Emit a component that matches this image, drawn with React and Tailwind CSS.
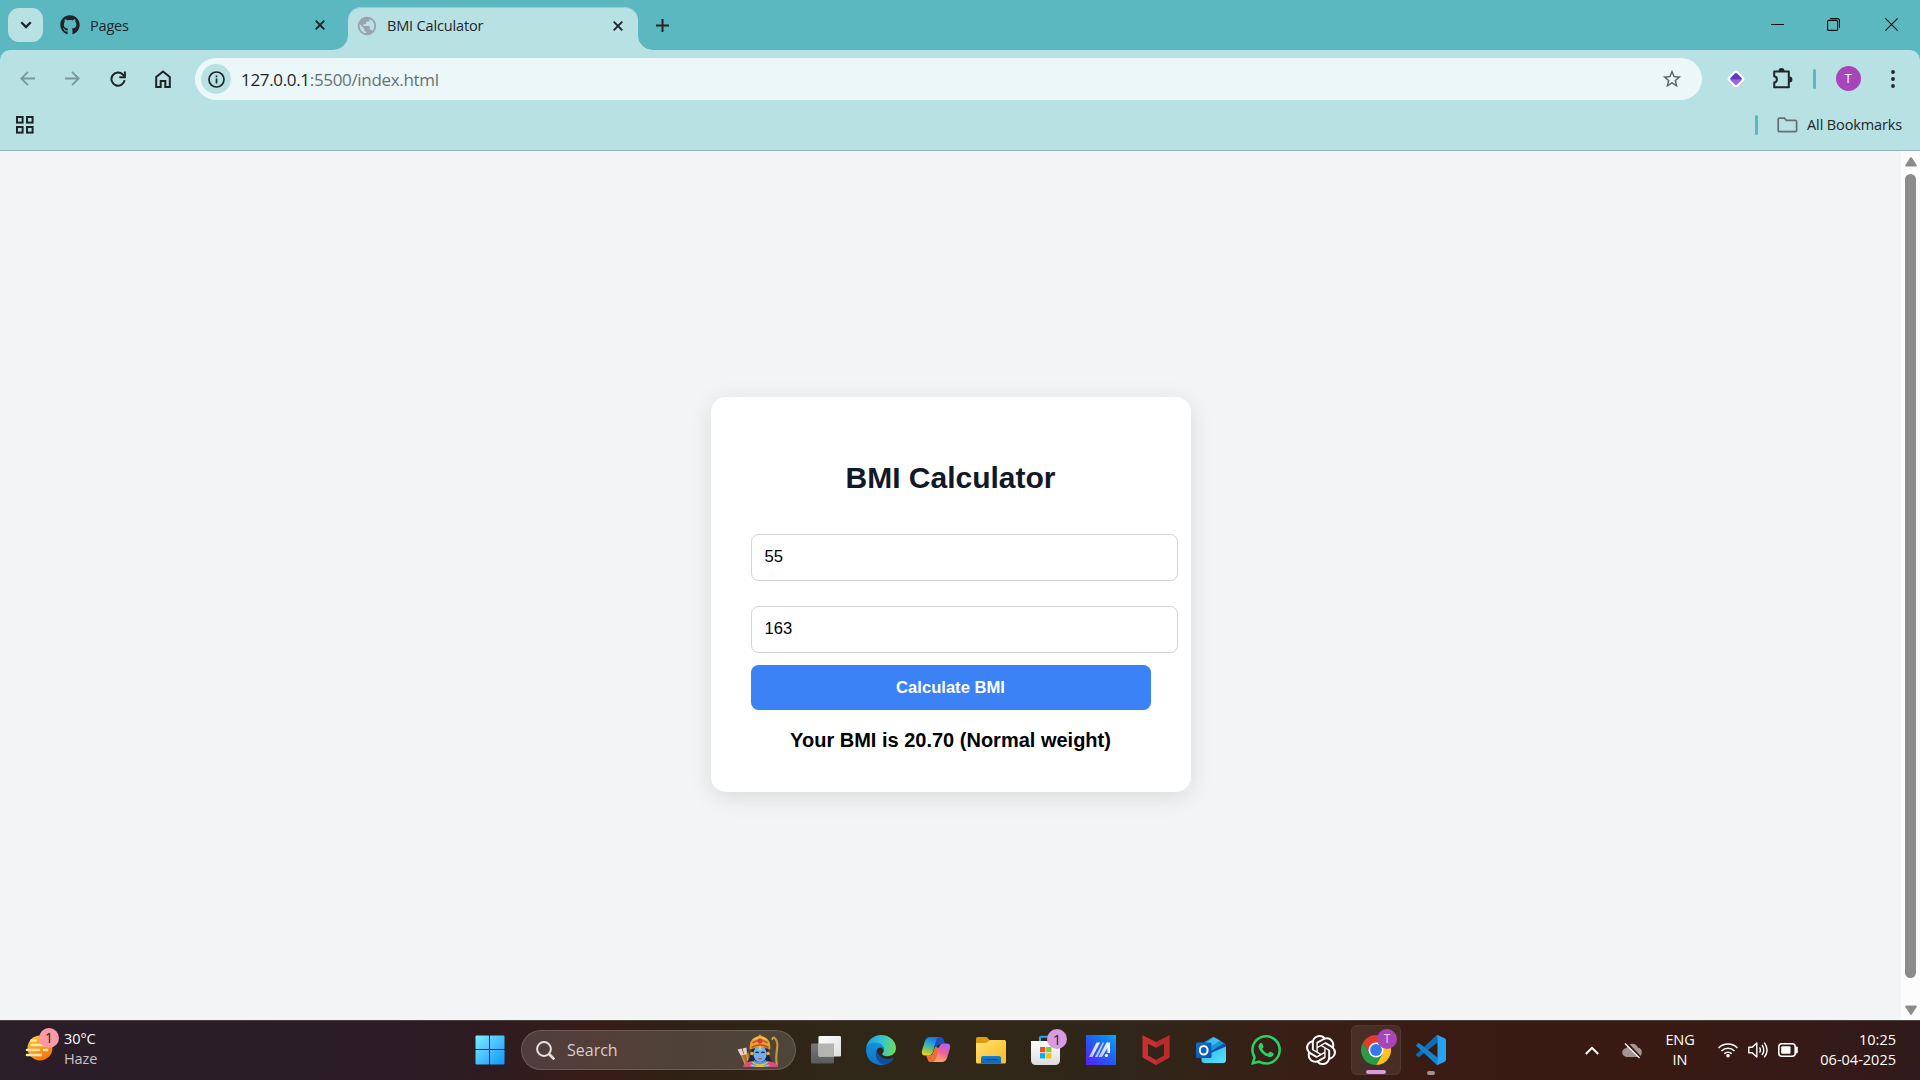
import { FaGithub } from "react-icons/fa";
import { MdPublic, MdStarBorder } from "react-icons/md";
import { SiOpenai, SiWhatsapp } from "react-icons/si";

const UI = "font-['Open_Sans','Noto_Sans',sans-serif]";

function Stroke({ w, h, className = "", sw = 2, children }) {
  return (
    <svg width={w} height={h} viewBox={`0 0 ${w} ${h}`} fill="none" stroke="currentColor" strokeWidth={sw} className={`shrink-0 ${className}`}>
      {children}
    </svg>
  );
}

function CloseX({ className = "" }) {
  return (
    <Stroke w={10} h={10} sw={1.9} className={className}>
      <path d="M.7 .7 9.3 9.3M9.3 .7.7 9.3" />
    </Stroke>
  );
}

function TabStrip() {
  return (
    <div className="flex h-[50px] shrink-0 bg-[#5bb8c1] text-[#1f2427]">
      <div className="ml-2 mt-2 flex h-[34px] w-[35px] items-center justify-center rounded-[11px] bg-[#b8e1e4]">
        <Stroke w={12} h={8} sw={2.3}><path d="M1.3 1.3 6 6 10.7 1.3" /></Stroke>
      </div>
      <div className="flex h-[50px] w-[290px] items-center pl-[17px]">
        <FaGithub className="size-5 shrink-0" />
        <span className="ml-[10px] mt-[2px] text-[14.5px] leading-5 tracking-[-0.2px]">Pages</span>
        <CloseX className="ml-auto mr-[8px]" />
      </div>
      <div className="flex h-[15px] w-[15px] self-end bg-[#b8e1e4]">
        <div className="size-full rounded-br-[15px] bg-[#5bb8c1]" />
      </div>
      <div className="mt-[7px] flex h-[43px] w-[289.5px] items-center rounded-t-[13px] border-t border-[#8dd0d5] bg-[#b8e1e4] pb-[7px] pl-[9px] pr-[15px]">
        <MdPublic className="-ml-px size-[22px] shrink-0 text-[#9ba3ad]" />
        <span className="ml-[9px] whitespace-nowrap text-[14.5px] leading-5 tracking-[-0.15px]">BMI Calculator</span>
        <CloseX className="ml-auto" />
      </div>
      <div className="flex h-[15px] w-[15px] self-end bg-[#b8e1e4]">
        <div className="size-full rounded-bl-[15px] bg-[#5bb8c1]" />
      </div>
      <div className="flex h-[50px] w-5 items-center justify-center">
        <Stroke w={13} h={13} sw={2}><path d="M6.5 0v13M0 6.5h13" /></Stroke>
      </div>
      <div className="ml-auto flex h-[49px] items-center text-[#111]">
        <Stroke w={13} h={12} sw={1} className="mr-[43px]"><path d="M0 5.5h13" /></Stroke>
        <Stroke w={13} h={13} sw={1.1} className="mr-[45px]">
          <rect x=".6" y="2.4" width="10" height="10" rx="1" />
          <path d="M3 .6h7.5a2 2 0 0 1 2 2V10" />
        </Stroke>
        <Stroke w={13} h={13} sw={1.1} className="mr-[22px]"><path d="M.3 .3 12.7 12.7M12.7 .3.3 12.7" /></Stroke>
      </div>
    </div>
  );
}

function Toolbar() {
  return (
    <div className="flex h-[58px] shrink-0 items-center rounded-t-[10px] bg-[#b8e1e4] text-[#1f2427]">
      <Stroke w={15} h={15} sw={1.8} className="mb-px ml-5 text-[#7b989c]"><path d="M15 7.5H1.5M8 .8 1.3 7.5 8 14.2" /></Stroke>
      <Stroke w={15} h={15} sw={1.8} className="mb-px ml-[30px] text-[#7b989c]"><path d="M0 7.5h13.5M7 .8l6.7 6.7L7 14.2" /></Stroke>
      <Stroke w={16} h={16} sw={2} className="mb-px ml-[29.5px]">
        <path d="M14.6 9.2A6.6 6.6 0 1 1 12.9 3.6L14.6 5.4" />
        <path d="M14.9 .6v5.6H9.3" />
      </Stroke>
      <Stroke w={16} h={18} sw={2} className="mb-px ml-[29px]">
        <path d="M1.2 16.9V6.9L8 1.5l6.8 5.4v10h-4.5v-5.8H5.7v5.8Z" />
      </Stroke>
      <div className="ml-[24.5px] flex h-[42px] w-[1507px] items-center rounded-full bg-[#ebf7f8] pl-[6px] pr-[19px]">
        <div className="flex size-[30px] items-center justify-center rounded-full bg-[#b8e1e4]">
          <Stroke w={17} h={17} sw={1.7}>
            <circle cx="8.5" cy="8.500" r="7.5" />
            <path d="M8.5 7.5v5M8.5 4.4v1.8" />
          </Stroke>
        </div>
        <span className="ml-[10px] mt-px text-[17px] leading-6 tracking-[-0.33px] text-[#1f2427]">127.0.0.1<span className="text-[#667174]">:5500/index.html</span></span>
        <MdStarBorder className="ml-auto size-[22px] text-[#5a6568]" />
      </div>
      <Stroke w={18} h={18} sw={0} className="ml-[24.5px]">
        <defs><linearGradient id="gem" gradientUnits="userSpaceOnUse" x1="9" y1="3" x2="9" y2="15"><stop offset=".45" stopColor="#6036c4" /><stop offset=".6" stopColor="#9867dc" /></linearGradient></defs>
        <path d="M7.2 1.300q1.800-1.500 3.600 0l5.900 5.900q1.500 1.800 0 3.600l-5.900 5.900q-1.800 1.500-3.600 0l-5.900-5.900q-1.500-1.800 0-3.600Z" fill="#fff" />
        <path d="M7.800 3.600q1.200-1 2.400 0l4.200 4.200q1 1.200 0 2.400l-4.200 4.200q-1.200 1-2.400 0l-4.200-4.200q-1-1.200 0-2.400Z" fill="url(#gem)" />
      </Stroke>
      <Stroke w={21} h={21} sw={2} className="mb-px ml-[27px]">
        <path d="M2.2 3.6h14.6v15.6H2.2v-4.6c3.600-.6 3.600-5.800 0-6.400Z" strokeLinejoin="round" />
        <path d="M6.5 3a3 3 0 0 1 6 0ZM17.4 8.400a3 3 0 0 1 0 6Z" fill="currentColor" stroke="none" />
      </Stroke>
      <div className="ml-[20px] h-5 w-[3px] rounded-full bg-[#5bb8c1]" />
      <div className={`mb-px ml-5 flex size-[25px] items-center justify-center rounded-full bg-[#a845b9] text-[13px] text-white ${UI}`}>T</div>
      <svg width="4" height="18" viewBox="0 0 4 18" className="mb-px ml-[30px]" fill="currentColor"><circle cx="2" cy="2" r="1.9" /><circle cx="2" cy="9" r="1.9" /><circle cx="2" cy="16" r="1.9" /></svg>
    </div>
  );
}

function BookmarksBar() {
  return (
    <div className="flex h-[43px] shrink-0 items-center border-b border-[#93b5ba] bg-[#b8e1e4] pb-[8px] text-[#1f2427]">
      <Stroke w={18} h={18} sw={2} className="ml-[15.5px]">
        <rect x="1" y="1" width="5.6" height="5.6" /><rect x="11" y="1" width="5.6" height="5.6" />
        <rect x="1" y="11" width="5.6" height="5.6" /><rect x="11" y="11" width="5.6" height="5.6" />
      </Stroke>
      <div className="ml-auto h-5 w-[3px] rounded-full bg-[#5bb8c1]" />
      <Stroke w={21} h={16} sw={1.7} className="ml-[19px] text-[#666e70]">
        <path d="M1.2 2.4q0-1.2 1.2-1.2h5l2 2.2h9q1.2 0 1.2 1.2v8.8q0 1.2-1.2 1.2h-16q-1.2 0-1.2-1.2Z" />
      </Stroke>
      <span className="ml-[9px] mr-[18px] text-[14.5px] leading-5 tracking-[-0.13px]">All Bookmarks</span>
    </div>
  );
}

function NumberField({ value }) {
  return (
    <input
      readOnly
      value={value}
      className="block h-[47px] w-[427px] rounded-[7.5px] border border-[#d1d5db] bg-white pb-[2px] pl-[13px] text-[16.6px] text-black outline-none"
    />
  );
}

function PageContent() {
  return (
    <div className="flex h-[869px] shrink-0 bg-[#f2f4f6]">
      <main className="flex flex-1 items-center justify-center pt-[18px] font-['Liberation_Sans',Arial,sans-serif]">
        <section className="flex h-[395px] w-[480px] flex-col rounded-[15px] bg-white px-10 shadow-[0_5px_25px_rgba(0,0,0,0.1)]">
          <h1 className="mt-[63px] text-center text-[30px] font-bold leading-[36px] text-[#111827]">BMI Calculator</h1>
          <div className="mt-[38px] flex flex-col gap-[25px]">
            <NumberField value="55" />
            <NumberField value="163" />
          </div>
          <button className="mt-3 h-[45px] w-full rounded-[7.5px] bg-[#3b82f6] pt-px text-[16.6px] font-bold text-white">Calculate BMI</button>
          <p className="mt-[18px] whitespace-nowrap text-center text-[20px] font-bold leading-6 text-black">Your BMI is 20.70 (Normal weight)</p>
        </section>
      </main>
      <div className="flex w-[19px] flex-col items-center bg-[#fcfcfc] pt-[6px] text-[#8b8b8b]">
        <svg width="12" height="10" viewBox="0 0 12 10" fill="currentColor"><path d="M5 .7Q6 -.4 7 .7L11.6 8q.6 1.4-.8 1.5H1.2Q-.2 9.4.4 8Z" /></svg>
        <div className="mt-[7px] h-[804px] w-[11px] rounded-full bg-current" />
        <svg width="12" height="10" viewBox="0 0 12 10" fill="currentColor" className="mt-[27px]"><path d="M5 9.3q1 1.1 2 0L11.6 2q.6-1.4-.8-1.5H1.2Q-.2.6.4 2Z" /></svg>
      </div>
    </div>
  );
}

function Tile({ children, className = "" }) {
  return <div className={`relative mr-[5px] flex size-[50px] shrink-0 items-center justify-center ${className}`}>{children}</div>;
}

function Pic({ children, box = 30 }) {
  return <svg width={box} height={box} viewBox={`0 0 ${box} ${box}`} className="overflow-visible">{children}</svg>;
}

function WindowsIcon() {
  return (
    <Pic>
      <defs><linearGradient id="win" gradientUnits="userSpaceOnUse" x1="0" y1="0" x2="30" y2="30"><stop stopColor="#7df0ff" /><stop offset="1" stopColor="#0c93ff" /></linearGradient></defs>
      <path fill="url(#win)" d="M1.5.5H14V14H.5V1.5q0-1 1-1ZM15 .5h13.500q1 0 1 1V14H15ZM.5 15H14v14.500H1.500q-1 0-1-1ZM15 15h14.500v13.500q0 1-1 1H15Z" />
    </Pic>
  );
}

function ArcherArt() {
  return (
    <svg width="43" height="33" viewBox="0 0 43 33">
      <path d="M36.500 3.500q5 2 3.500 12t0 16" fill="none" stroke="#c99338" strokeWidth="2.200" />
      <path d="M35.500 6q-1-3 2-2.500" fill="none" stroke="#dba544" strokeWidth="1.500" />
      <path d="M5 20l7-1.500 1.500 13H8Z" fill="#a8722c" />
      <path d="M.5 15.500l4-1 2.500 6-3 1.500ZM5.500 14.500l4-1 .5 6.500-2.500 1Z" fill="#e9cfc4" />
      <path d="M4.500 21l4 10M9.500 19.500l2 11" stroke="#d79c48" strokeWidth="1.200" />
      <path d="M15 15q-1.500 9-5 13l5 3h17l3.500-3q-4-5-5-13Z" fill="#1c2147" />
      <path d="M6 33q1-5 9-6l8 2.500 8-2.500q9 1 10 6Z" fill="#d94c7e" />
      <path d="M17 26q6 4 12 0l2.500 7h-17Z" fill="#4f9bdc" />
      <path d="M15 28q8 6 16 0M13.500 31q9 3 19 0" fill="none" stroke="#f0bd42" strokeWidth="1.300" />
      <ellipse cx="23" cy="20" rx="6.600" ry="8" fill="#6db2ea" />
      <path d="M18.500 18.700q1.700-1 3.200 0M24.300 18.700q1.700-1 3.200 0" stroke="#172349" strokeWidth="1.300" fill="none" />
      <path d="M21.300 24.200q1.700 1.300 3.400 0" stroke="#c2344d" strokeWidth="1.200" fill="none" />
      <path d="M12.800 15.500Q12 8 16 4.500q3-2 5.500-2.500 1.500-3 3 0 3 .5 5.500 2.500 4 3.500 3.200 11-10-5-20.400 0Z" fill="#e8a32e" />
      <path d="M15.500 9q7.500-5.500 15 0M14.500 13.500q8.500-5 17 0" stroke="#bd4f27" strokeWidth="1.500" fill="none" />
      <ellipse cx="23" cy="7" rx="2.400" ry="2.800" fill="#d63d46" />
      <path d="M17 5.500q6-4 12 0" stroke="#f6cf5a" fill="none" />
      <path d="M23 12.500v3.500" stroke="#f6d55c" strokeWidth="1.500" />
      <circle cx="15" cy="19.500" r="1.700" fill="#edb23a" /><circle cx="31" cy="19.500" r="1.700" fill="#edb23a" />
    </svg>
  );
}

function TaskViewIcon() {
  return (
    <Pic>
      <defs>
        <linearGradient id="tvA" x2="1" y2="1"><stop stopColor="#fff" /><stop offset="1" stopColor="#dedede" /></linearGradient>
        <linearGradient id="tvB" x2="0" y2="1"><stop stopColor="#777" /><stop offset="1" stopColor="#5b5b5b" /></linearGradient>
      </defs>
      <rect x="0" y="8.500" width="23" height="20" rx="1.200" fill="url(#tvB)" />
      <rect x="7.500" y="1" width="22.500" height="20.500" rx="1.200" fill="url(#tvA)" />
      <path d="M7.500 8.500H23v13H8.500q-1 0-1-1Z" fill="#b4b4b2" />
    </Pic>
  );
}

function EdgeIcon() {
  return (
    <Pic>
      <defs>
        <linearGradient id="edA" x1="0" y1=".4" x2="1" y2=".5"><stop stopColor="#1d9de2" /><stop offset=".5" stopColor="#33c4d3" /><stop offset="1" stopColor="#6bdd55" /></linearGradient>
        <linearGradient id="edB" x2="0" y2="1"><stop stopColor="#158fd8" /><stop offset="1" stopColor="#1273c9" /></linearGradient>
      </defs>
      <path fill="url(#edA)" d="M0 13.500C1 5.500 7.300 0 15 0c9 0 15 6.500 15 13 0 5-4 8.200-8.600 8.200-3.600 0-5.200-1.200-5.200-2.200 0-.8 1.800-1.700 1.800-4.300C18 11 14 8 9.600 8 4.500 8 1 11 0 13.500Z" />
      <path fill="url(#edB)" d="M0 15c0-4 4.200-7.500 9.200-7.500C14 7.500 18 11 18 14.700q0 .6-.2 1.200-1-3.400-3.600-3.400c-3 0-4.700 4-3.200 8.300 1.600 4.800 6 7.800 9.500 8.100C18.500 29.700 17 30 15 30 6.500 30 0 23.500 0 15Z" />
      <path fill="#104f9d" d="M10.900 15.500C8.500 19.500 10 27.500 17.500 29.700c5 .2 8.700-3.200 10.300-6.200.4-.8-.3-1-1-.6-5 2.500-14.500.6-15.900-7.400Z" />
    </Pic>
  );
}

function CopilotIcon() {
  return (
    <Pic>
      <defs>
        <linearGradient id="cpA" x1=".6" y1="0" x2=".3" y2="1"><stop stopColor="#1b76dd" /><stop offset=".35" stopColor="#24a6d9" /><stop offset=".68" stopColor="#79c35b" /><stop offset="1" stopColor="#f1cf28" /></linearGradient>
        <linearGradient id="cpB" x1=".7" y1="0" x2=".3" y2="1"><stop stopColor="#a964e8" /><stop offset=".45" stopColor="#ee5f9c" /><stop offset="1" stopColor="#ffad62" /></linearGradient>
      </defs>
      <path fill="#1c4fbf" d="M14 2h5.500q2.500 0 3.300 3l1.200 4H20q-3 0-4 3l-2 4Z" />
      <path fill="#ef6b37" d="M9 27h6l4-14-5-1-3 8-6 .5 1.700 4Q7.400 27 9 27Z" />
      <path fill="url(#cpA)" d="M9 2h9q-2 .5-2.800 3L12 16.500Q11 20.500 7.500 20.500H4q-4 0-3-5L4 6Q5.400 2 9 2Z" />
      <path fill="url(#cpB)" d="M21 27h-9q2-.5 2.800-3L18 12.500q1-4 4.500-4H26q4 0 3 5L26 23q-1.400 4-5 4Z" />
    </Pic>
  );
}

function FolderIcon() {
  return (
    <Pic>
      <defs>
        <linearGradient id="fd" x2="1" y2="1"><stop stopColor="#ffdf70" /><stop offset="1" stopColor="#fbbd23" /></linearGradient>
        <linearGradient id="fdb" x2="0" y2="1"><stop stopColor="#1281d5" /><stop offset="1" stopColor="#1066b2" /></linearGradient>
      </defs>
      <path fill="#dd9b10" d="M1.500 2h8.500q1 0 1.800 1L13.500 5H29v5H0V3.500Q0 2 1.500 2Z" />
      <path fill="url(#fd)" d="M0 8h9.500q1 0 1.800-.8L13 5.500q.6-.5 1.500-.5h14q1.500 0 1.500 1.500V27q0 1.500-1.500 1.500h-27Q0 28.500 0 27Z" />
      <path fill="url(#fdb)" d="M5 28.500V23q0-2 2-2h16q2 0 2 2v5.500Z" />
      <path stroke="#074c8c" strokeWidth="1.200" d="M8.500 24.500h13" />
    </Pic>
  );
}

function StoreIcon() {
  return (
    <Pic>
      <defs><linearGradient id="st" x2="0" y2="1"><stop stopColor="#fff" /><stop offset="1" stopColor="#dcdcdc" /></linearGradient></defs>
      <path d="M9 7V2.700q0-1 1-1h9.500q1 0 1 1V7" fill="none" stroke="#29a9e8" strokeWidth="2" />
      <path fill="url(#st)" d="M0 6h29v19q0 5-5 5H5q-5 0-5-5Z" />
      <path fill="#f1511b" d="M9 12h5.200v5.200H9Z" /><path fill="#80cc28" d="M15.200 12h5.200v5.200h-5.200Z" />
      <path fill="#00adef" d="M9 18.200h5.200v5.200H9Z" /><path fill="#fbbc09" d="M15.200 18.200h5.200v5.200h-5.200Z" />
    </Pic>
  );
}

function AsusIcon() {
  return (
    <Pic>
      <defs>
        <linearGradient id="as" x1="0" y1="1" x2="1" y2="0"><stop stopColor="#5a1ef5" /><stop offset=".55" stopColor="#1d63f2" /><stop offset="1" stopColor="#0aa3fb" /></linearGradient>
        <linearGradient id="asw" x2="1" y2="0"><stop stopColor="#a9b8fb" /><stop offset="1" stopColor="#fff" /></linearGradient>
      </defs>
      <rect width="30" height="30" fill="url(#as)" />
      <path fill="url(#asw)" d="M3 22 10.500 7.500h3.500L6.500 22Z" />
      <path fill="#b6c6fd" d="M9 22 16.500 7.500h1.700L11.500 22Z" />
      <path fill="url(#asw)" d="M12.500 22 20.500 7.500h3.500V18h-2.600V13L16 22Z" />
      <circle cx="20.400" cy="20.500" r="1.600" fill="#fff" />
    </Pic>
  );
}

function McAfeeIcon() {
  return (
    <Pic>
      <path fill="#c9302f" fillRule="evenodd" d="M1.500.300 15 7 28.500.300V22.500L15 30 1.500 22.500ZM7 8.800V20.500L15 25 23 20.500V8.800L15 12.800Z" />
      <path fill="#a92529" d="M15 7 28.500.300V22.500L15 30V25l8-4.500V8.800l-8 4Z" opacity=".45" />
    </Pic>
  );
}

function OutlookIcon() {
  return (
    <Pic>
      <defs>
        <linearGradient id="ol" x2="1" y2="1"><stop stopColor="#28b5f5" /><stop offset="1" stopColor="#5ae3fb" /></linearGradient>
        <linearGradient id="olb" x2="1" y2="1"><stop stopColor="#1272cf" /><stop offset="1" stopColor="#0b4fa8" /></linearGradient>
      </defs>
      <path fill="#1b93dd" d="M5.500 11Q5.500 9 7 8L16 2.500q1.500-.9 3 0L28 8q2 1 2 3L18 20 5.500 16Z" />
      <path fill="#42bdf1" d="m8 9 9.500-6.700L24 5.500 13 13Z" />
      <path fill="#0c52a5" d="m10 19 18.500-11Q30 9 30 11.500L14 22Z" />
      <path fill="url(#ol)" d="M30 11.500V25q0 3-3 3H8.500q-3 0-3-3v-3Z" />
      <rect y="7.500" width="15.500" height="15.500" rx="1.500" fill="url(#olb)" />
      <ellipse cx="7.700" cy="15.200" rx="3.900" ry="4.300" fill="none" stroke="#fff" strokeWidth="2" />
    </Pic>
  );
}

function ChromeIcon() {
  return (
    <Pic>
      <path fill="#e33b2e" d="M2 7.500A15 15 0 0 1 28 7.500L15 8 8.500 18.800Z" />
      <path fill="#fcc31e" d="M28 7.500A15 15 0 0 1 15 30l6.500-11.300L15 7.500Z" />
      <path fill="#2a9c48" d="M15 30A15 15 0 0 1 2 7.500l6.500 11.300q5 6 13 0Z" />
      <circle cx="15" cy="15" r="7.500" fill="#fff" />
      <circle cx="15" cy="15" r="5.900" fill="#3079ea" />
    </Pic>
  );
}

function CodeIcon() {
  return (
    <Pic>
      <path fill="#0a6fb8" d="M21.500 7.500 3.300 21.800q-.6.400-1.200 0L.4 20.200q-.6-.6 0-1.200L20 .800q1-.9 2.500-.5Z" />
      <path fill="#1483cd" d="M21.500 22.500 3.300 8.200q-.6-.4-1.200 0L.4 9.800q-.6.600 0 1.200L20 29.200q1 .9 2.500.5Z" />
      <path fill="#28a1ef" d="M22 .2 28.700 3.300Q30 4 30 5.200V24.800Q30 26 28.700 26.700L22 29.800q-1.200.4-2-.6 1.500.7 1.500-1V1.800q0-1.700-1.500-1Q20.800-.2 22 .2Z" />
    </Pic>
  );
}

function HazeIcon() {
  return (
    <svg width="30" height="27" viewBox="0 0 30 27">
      <defs><linearGradient id="hz" x1=".2" y1="0" x2=".7" y2="1"><stop stopColor="#ffc52e" /><stop offset="1" stopColor="#f4720c" /></linearGradient></defs>
      <circle cx="15" cy="13" r="12.500" fill="url(#hz)" />
      <g stroke="#ffe5a8" strokeWidth="2.600" strokeLinecap="round">
        <path d="M6.500 5.500h4M6.500 10h14M2 15h12M19 15h3M2 20h14" />
      </g>
    </svg>
  );
}

function Taskbar() {
  return (
    <footer className={`flex h-[60px] shrink-0 items-center border-t border-[#4a4241] bg-[linear-gradient(90deg,#2a1e29_0%,#2b1c26_20%,#2d1b20_25%,#381d16_31%,#302115_35%,#2f2718_44%,#2f2619_58%,#372016_66%,#3a1b13_75%,#381a14_90%,#311a1b_100%)] pb-px text-white ${UI}`}>
      <div className="relative ml-[25px] flex h-[58px] w-[439.5px]">
        <div className="mt-[14px]"><HazeIcon /></div>
        <div className="absolute left-[14px] top-[7px] flex size-5 items-center justify-center rounded-full bg-[#f99aa6] text-[14px] leading-none text-[#2b2024]">1</div>
        <div className="ml-[9px] mt-[8px] text-[14.5px] leading-5 tracking-[-0.1px]">
          <div>30°C</div>
          <div className="text-[#c9c4c7]">Haze</div>
        </div>
      </div>
      <Tile><WindowsIcon /></Tile>
      <div className="ml-[1.5px] mr-[5px] flex h-[40px] w-[275px] items-center rounded-full border border-white/15 bg-white/15 pl-[14px] pr-[15px]">
        <Stroke w={19} h={19} sw={2} className="text-[#e6e2de]"><circle cx="8" cy="8" r="6.900" /><path d="m13 13 5.300 5.300" strokeWidth="2.600" /></Stroke>
        <span className="ml-[12px] text-[16px] leading-6 text-[#d3cfca]">Search</span>
        <div className="ml-auto"><ArcherArt /></div>
      </div>
      <Tile><TaskViewIcon /></Tile>
      <Tile><EdgeIcon /></Tile>
      <Tile><CopilotIcon /></Tile>
      <Tile><FolderIcon /></Tile>
      <Tile>
        <StoreIcon />
        <div className="absolute left-[26px] top-[4px] flex size-5 items-center justify-center rounded-full bg-[#d99be0] text-[15px] leading-none text-[#33203a]">1</div>
      </Tile>
      <Tile><AsusIcon /></Tile>
      <Tile><McAfeeIcon /></Tile>
      <Tile><OutlookIcon /></Tile>
      <Tile><SiWhatsapp className="size-[30px] text-[#25d366]" /></Tile>
      <Tile><SiOpenai className="size-[30px]" /></Tile>
      <Tile className="rounded-[6px] border border-white/5 bg-white/8">
        <ChromeIcon />
        <div className="absolute left-[25px] top-[3px] flex size-5 items-center justify-center rounded-full bg-[#a845b9] text-[12px] leading-none text-[#ecc9f0]">T</div>
        <div className="absolute bottom-0 left-[14px] h-[4px] w-5 rounded-full bg-[#d99be0]" />
      </Tile>
      <Tile>
        <CodeIcon />
        <div className="absolute bottom-0 left-[21px] h-[4px] w-2 rounded-full bg-[#a09392]" />
      </Tile>
      <div className="ml-auto flex items-center pr-[24px]">
        <Stroke w={14} h={9} sw={2} className="mr-[23px]"><path d="m.8 8 6.200-6.200L13.200 8" /></Stroke>
        <svg width="20" height="18" viewBox="0 0 20 18" className="mr-[22px]">
          <path fill="#a59592" d="M5 16a4.500 4.500 0 0 1-.5-9A6 6 0 0 1 15.800 6.500 4.800 4.800 0 0 1 15.500 16Z" />
          <path d="M3.500 1 18 16.500" stroke="#381a14" strokeWidth="3" /><path d="M3 2.500 17.500 17" stroke="#fff" strokeWidth="1.200" />
        </svg>
        <div className="mr-[22px] w-[32px] text-center text-[14.5px] leading-5 tracking-[-0.1px]"><div>ENG</div><div>IN</div></div>
        <Stroke w={20} h={16} sw={1.500} className="mr-[10px]">
          <path d="M.6 6a13.300 13.300 0 0 1 18.800 0M3.500 9a9.200 9.200 0 0 1 13 0M6.300 11.800a5.200 5.200 0 0 1 7.400 0" />
          <circle cx="10" cy="13.800" r="1.800" fill="currentColor" stroke="none" />
        </Stroke>
        <Stroke w={20} h={18} sw={1.400} className="mr-[10px]">
          <path d="M.8 6.300h3.400L8.800 2v14l-4.600-4.300H.8Z" strokeLinejoin="round" />
          <path d="M11.500 6.300q1.800 2.700 0 5.400M14 4q3.600 5 0 10M16.300 1.600q5.600 7.400 0 14.800" />
        </Stroke>
        <Stroke w={20} h={14} sw={1.600}>
          <rect x=".8" y=".8" width="16.400" height="12.400" rx="3" />
          <rect x="3.200" y="3.200" width="9.300" height="7.600" rx="1" fill="currentColor" stroke="none" />
          <path d="M18.700 4.500v5" strokeWidth="2.200" strokeLinecap="round" />
        </Stroke>
        <div className="w-[98px] text-right text-[14.5px] leading-5"><div>10:25</div><div>06-04-2025</div></div>
      </div>
    </footer>
  );
}

export default function App() {
  return (
    <div className={`flex h-[1080px] w-[1920px] flex-col overflow-hidden bg-[#5bb8c1] ${UI}`}>
      <TabStrip />
      <Toolbar />
      <BookmarksBar />
      <PageContent />
      <Taskbar />
    </div>
  );
}
